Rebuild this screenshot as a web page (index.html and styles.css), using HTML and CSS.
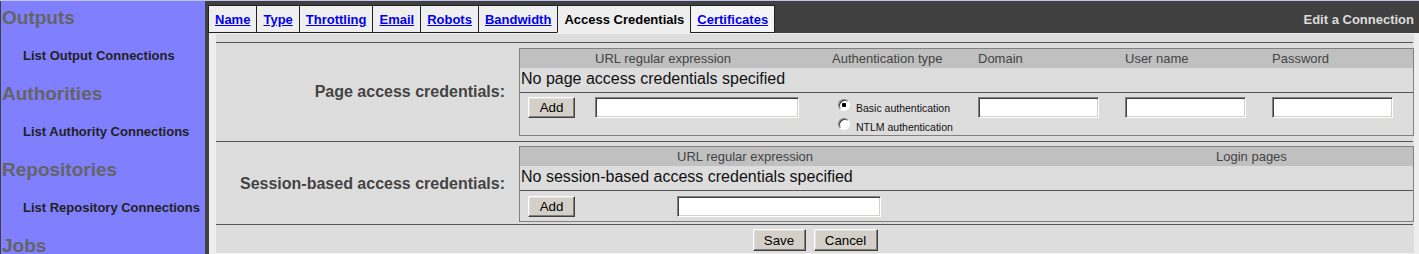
FILE: index.html
```html
<!DOCTYPE html>
<html lang="en">
<head>
    <meta charset="UTF-8">
    <title>Edit a Connection</title>
    <link rel="stylesheet" href="styles.css">
</head>
<body>
    <div class="page">
        <div class="navigation">
            <div class="nav-head">Outputs</div>
            <div class="nav-link">List Output Connections</div>
            <div class="nav-head">Authorities</div>
            <div class="nav-link">List Authority Connections</div>
            <div class="nav-head">Repositories</div>
            <div class="nav-link">List Repository Connections</div>
            <div class="nav-head">Jobs</div>
        </div>
        <div class="main">
            <div class="tabbar">
                <a class="tab" href="#">Name</a>
                <a class="tab" href="#">Type</a>
                <a class="tab" href="#">Throttling</a>
                <a class="tab" href="#">Email</a>
                <a class="tab" href="#">Robots</a>
                <a class="tab" href="#">Bandwidth</a>
                <span class="tab active">Access Credentials</span>
                <a class="tab last" href="#">Certificates</a>
                <span class="heading">Edit a Connection</span>
            </div>
            <div class="tabpanel">
                <div class="displaytable">
                    <div class="separator first"></div>
                    <div class="field">
                        <div class="description">Page access credentials:</div>
                        <div class="formtable">
                            <div class="formrow page-cols header">
                                <span></span>
                                <span>URL regular expression</span>
                                <span>Authentication type</span>
                                <span>Domain</span>
                                <span>User name</span>
                                <span>Password</span>
                            </div>
                            <div class="message">No page access credentials specified</div>
                            <div class="formrow page-cols inputs">
                                <button type="button">Add</button>
                                <input type="text" class="url-input">
                                <div class="auth-options">
                                    <label class="option"><input type="radio" name="authtype" checked><span>Basic authentication</span></label>
                                    <label class="option"><input type="radio" name="authtype"><span>NTLM authentication</span></label>
                                </div>
                                <input type="text" class="short-input">
                                <input type="text" class="short-input">
                                <input type="text" class="short-input">
                            </div>
                        </div>
                    </div>
                    <div class="separator middle"></div>
                    <div class="field">
                        <div class="description">Session-based access credentials:</div>
                        <div class="formtable">
                            <div class="formrow session-cols header">
                                <span></span>
                                <span>URL regular expression</span>
                                <span>Login pages</span>
                            </div>
                            <div class="message">No session-based access credentials specified</div>
                            <div class="formrow session-cols inputs session">
                                <button type="button">Add</button>
                                <input type="text" class="url-input">
                                <span></span>
                            </div>
                        </div>
                    </div>
                    <div class="separator last"></div>
                    <div class="actions">
                        <button type="button">Save</button>
                        <button type="button">Cancel</button>
                    </div>
                </div>
            </div>
        </div>
    </div>
</body>
</html>
```

FILE: styles.css
```css
body {
    margin: 0;
    font-family: "Liberation Sans", Arial, sans-serif;
    background-color: #404040;
}
.page {
    display: flex;
    height: 253px;
    overflow: hidden;
    border-top: 1px solid #c4c4f0;
    padding-left: 1px;
    background: #404040;
}
.navigation {
    width: 204px;
    margin-right: 4px;
    background: #8080ff;
}
.nav-head {
    height: 38px;
    line-height: 33px;
    padding-left: 1px;
    font-size: 19px;
    font-weight: bold;
    color: #646464;
}
.nav-link {
    height: 38px;
    line-height: 33px;
    padding-left: 22px;
    font-size: 13px;
    font-weight: bold;
    color: #222;
}
.main {
    flex: 1;
    display: flex;
    flex-direction: column;
}
.tabbar {
    display: flex;
    align-items: flex-end;
    height: 32px;
    margin-left: -1px;
    background: #404040;
}
.tab {
    padding: 4px 6px 2px;
    line-height: 20px;
    border: 1px solid #222;
    border-right: none;
    background: #efefef;
    font-size: 13px;
    font-weight: bold;
    color: #0000ee;
    text-decoration: underline;
}
.tab.last {
    border-right: 1px solid #222;
    background: #f4f4f4;
}
.tab.active {
    color: #000;
    text-decoration: none;
    background: #eee;
    border-bottom-color: #eee;
}
.heading {
    margin-left: auto;
    padding: 4px 5px 3px 0;
    line-height: 20px;
    font-size: 13px;
    font-weight: bold;
    color: #dcdcdc;
}
.tabpanel {
    flex: 1;
    background: #eee;
    padding: 1px 5px 1px 7px;
}
.displaytable {
    display: flex;
    flex-direction: column;
    background: #ddd;
    height: 219px;
}
.separator {
    border-top: 1px solid #555;
    margin-right: 1px;
}
.separator.first {
    margin-top: 8px;
    margin-bottom: 5px;
}
.separator.middle {
    margin-top: 5px;
    margin-bottom: 4px;
}
.separator.last {
    margin-top: 2px;
    margin-bottom: 4px;
}
.field {
    display: grid;
    grid-template-columns: 303px 1fr;
    align-items: center;
}
.description {
    text-align: right;
    padding-right: 14px;
    font-size: 16px;
    font-weight: bold;
    color: #444;
    white-space: nowrap;
}
.formtable {
    border: 1px solid #808080;
}
.formrow {
    display: grid;
    padding-left: 8px;
}
.page-cols {
    grid-template-columns: 67px 237px 146px 147px 147px 1fr;
}
.session-cols {
    grid-template-columns: 149px 539px 1fr;
}
.header {
    background: #c0c0c0;
    padding-top: 1px;
    line-height: 18px;
    font-size: 13px;
    color: #444;
    white-space: nowrap;
}
.message {
    padding: 0 0 2px 1px;
    line-height: 22px;
    font-size: 16px;
    color: #111;
    border-bottom: 1px solid #555;
}
.inputs {
    align-items: start;
    padding-top: 3px;
    padding-bottom: 1px;
}
.inputs.session {
    padding-top: 4px;
    padding-bottom: 4px;
}
button {
    height: 21px;
    padding: 0 9px;
    border: 1px solid;
    border-color: #fff #404040 #404040 #fff;
    box-shadow: inset -1px -1px #808080, inset 1px 1px #dfdfdf;
    background: #d4d0c8;
    font-family: "Liberation Sans", Arial, sans-serif;
    font-size: 13.33px;
    color: #000;
}
.inputs button {
    width: 47px;
    margin-top: 1px;
}
input[type="text"] {
    box-sizing: border-box;
    height: 21px;
    margin: 1px 0 0;
    border: 1px solid;
    border-color: #808080 #fff #fff #808080;
    box-shadow: inset 1px 1px #404040, inset -1px -1px #d4d0c8;
    background: #fff;
}
.url-input {
    width: 204px;
}
.short-input {
    width: 121px;
}
.auth-options {
    display: flex;
    flex-direction: column;
}
.option {
    display: flex;
    align-items: flex-start;
    height: 19px;
    font-size: 10.5px;
    color: #111;
}
.option span {
    padding-top: 3px;
    line-height: 19px;
}
.option input {
    appearance: none;
    box-sizing: border-box;
    width: 12px;
    height: 12px;
    margin: 3px 6px 0;
    border: 1px solid;
    border-color: #808080 #fff #fff #808080;
    border-radius: 50%;
    box-shadow: inset 1px 1px #404040;
    background: #fff;
}
.option input:checked {
    background: radial-gradient(circle, #000 0 2px, #fff 2.5px);
}
.actions {
    display: flex;
    justify-content: center;
    gap: 8px;
}
.actions button {
    width: 53px;
    height: 22px;
}
.actions button + button {
    width: 64px;
}
```
